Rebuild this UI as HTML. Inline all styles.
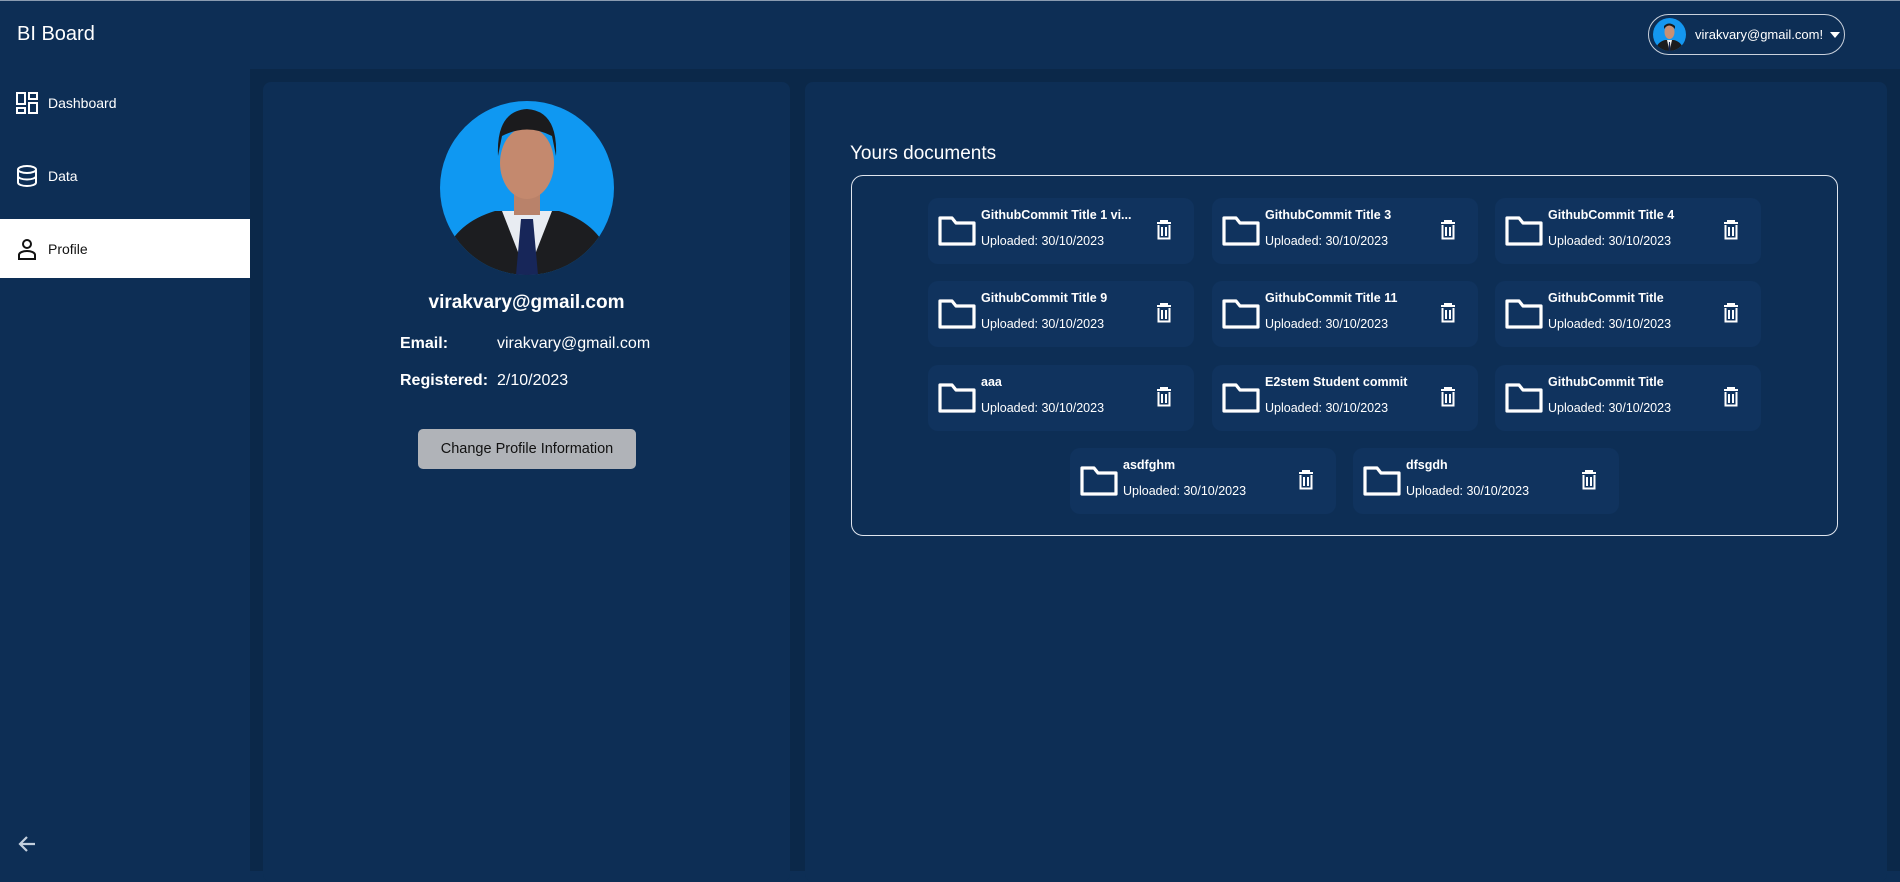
<!DOCTYPE html>
<html><head><meta charset="utf-8"><style>
*{margin:0;padding:0;box-sizing:border-box}
body{width:1900px;height:870px;background:#0d2e55;font-family:"Liberation Sans",sans-serif;color:#fff;position:relative;overflow:hidden;border-top:1px solid #8a9bb0}
.abs{position:absolute}
.content{left:250px;top:68px;width:1650px;height:802px;background:#0b2849}
.card{background:#0d2e55;border-radius:8px}
.nav{left:0;width:250px;height:59px;display:flex;align-items:center;padding-left:16px;font-size:14px}
.nav svg{margin-right:10px}
.doc{width:266px;height:66px;background:#10335e;border-radius:10px}
.doc .t{position:absolute;left:53px;top:10px;font-size:12.5px;font-weight:bold;white-space:nowrap}
.doc .s{position:absolute;left:53px;top:36px;font-size:12.5px}
.doc .f{position:absolute;left:10px;top:17px}
.doc .d{position:absolute;left:228px;top:22px}
</style></head><body>
<div class="abs" style="left:17px;top:22px;font-size:20px">BI Board</div>
<div class="abs" style="left:1648px;top:13px;width:197px;height:41px;border:1px solid #c9d1dc;border-radius:21px">
<svg class="abs" style="left:4px;top:3px" width="33" height="33" viewBox="0 0 33 33"><defs><clipPath id="c1"><circle cx="16.5" cy="16.5" r="16.5"/></clipPath></defs><g clip-path="url(#c1)"><rect width="33" height="33" fill="#1497f0"/><path d="M2 33 Q4 24 12 22 L21 22 Q29 24 31 33Z" fill="#1c1c1e"/><path d="M14 22 L16.5 33 L19 22Z" fill="#eee"/><path d="M16 24 L17 24 L17.5 33 L15.5 33Z" fill="#142552"/><ellipse cx="16.5" cy="14" rx="5" ry="7" fill="#c99074"/><path d="M11 11 Q16 4 22 11 L22 8 Q16 3 11 8Z" fill="#1a1a1a"/></g></svg>
<div class="abs" style="left:46px;top:12px;font-size:13px">virakvary@gmail.com!</div>
<svg class="abs" style="left:181px;top:17px" width="10" height="6"><path d="M0 0H10L5 6Z" fill="#fff"/></svg>
</div>

<div class="abs nav" style="top:72px"><svg width="22" height="22" viewBox="0 0 22 22" fill="none" stroke="#fff" stroke-width="2"><rect x="1" y="1" width="8" height="11"/><rect x="13" y="1" width="8" height="6"/><rect x="1" y="16" width="8" height="5"/><rect x="13" y="11" width="8" height="10"/></svg>Dashboard</div>
<div class="abs nav" style="top:145px"><svg width="22" height="22" viewBox="0 0 22 22" fill="none" stroke="#fff" stroke-width="2"><ellipse cx="11" cy="4.5" rx="9" ry="3.5"/><path d="M2 4.5V17.5C2 19.5 6 21 11 21S20 19.5 20 17.5V4.5M2 11C2 13 6 14.5 11 14.5S20 13 20 11"/></svg>Data</div>
<div class="abs nav" style="top:218px;background:#fff;color:#111"><svg width="22" height="22" viewBox="0 0 22 22" fill="none" stroke="#111" stroke-width="2"><circle cx="11" cy="6" r="4"/><path d="M3 21V17C3 14.5 7 13 11 13S19 14.5 19 17V21Z"/></svg>Profile</div>
<svg class="abs" style="left:17px;top:833px" width="20" height="20" viewBox="0 0 20 20" fill="none" stroke="#c3cfdd" stroke-width="2.2"><path d="M18 10H3M10 3L3 10L10 17"/></svg>

<div class="abs content"></div>
<div class="abs card" style="left:263px;top:81px;width:527px;height:800px"></div>
<div class="abs card" style="left:805px;top:81px;width:1082px;height:800px"></div>

<svg class="abs" style="left:440px;top:100px" width="174" height="174" viewBox="0 0 174 174"><defs><clipPath id="c2"><circle cx="87" cy="87" r="87"/></clipPath></defs><g clip-path="url(#c2)"><rect width="174" height="174" fill="#0f98f2"/><path d="M0 174 Q5 125 55 110 L119 110 Q168 125 174 174Z" fill="#1c1d20"/><path d="M62 110 L87 174 L112 110Z" fill="#e8ecf2"/><path d="M81 118 L93 118 L98 174 L76 174Z" fill="#172659"/><rect x="74" y="90" width="26" height="24" fill="#b9826a"/><ellipse cx="87" cy="62" rx="27" ry="36" fill="#c4896e"/><path d="M58 55 Q56 10 87 8 Q118 10 116 55 L112 35 Q87 22 62 35Z" fill="#1b1b1d"/></g></svg>
<div class="abs" style="left:263px;width:527px;top:291px;text-align:center;font-size:19px;font-weight:bold">virakvary@gmail.com</div>
<div class="abs" style="left:400px;top:334px;font-size:16px;font-weight:bold">Email:</div>
<div class="abs" style="left:497px;top:334px;font-size:16px">virakvary@gmail.com</div>
<div class="abs" style="left:400px;top:371px;font-size:16px;font-weight:bold">Registered:</div>
<div class="abs" style="left:497px;top:371px;font-size:16px">2/10/2023</div>
<div class="abs" style="left:418px;top:428px;width:218px;height:40px;background:#b0b3b8;border-radius:5px;color:#111;font-size:14.5px;text-align:center;line-height:40px">Change Profile Information</div>

<div class="abs" style="left:850px;top:142px;font-size:19px">Yours documents</div>
<div class="abs" style="left:851px;top:174px;width:987px;height:361px;border:1px solid #dfe5ee;border-radius:12px"></div>

<div id="docs"></div>
<script>
var d=[[928,197,"GithubCommit Title 1 vi..."],[1212,197,"GithubCommit Title 3"],[1495,197,"GithubCommit Title 4"],
[928,280,"GithubCommit Title 9"],[1212,280,"GithubCommit Title 11"],[1495,280,"GithubCommit Title"],
[928,364,"aaa"],[1212,364,"E2stem Student commit"],[1495,364,"GithubCommit Title"],
[1070,447,"asdfghm"],[1353,447,"dfsgdh"]];
var h="";
d.forEach(function(a){h+='<div class="abs doc" style="left:'+a[0]+'px;top:'+a[1]+'px"><svg class="f" width="38" height="32" viewBox="0 0 38 32" fill="none" stroke="#fff" stroke-width="3.2" stroke-linejoin="round"><path d="M2 3H14L18 8H36V29H2Z"/></svg><div class="t">'+a[2]+'</div><div class="s">Uploaded: 30/10/2023</div><svg class="d" width="16" height="20" viewBox="0 0 16 20" fill="none" stroke="#fff" stroke-width="2"><path d="M1 3H15M5 3V1H11V3M2.5 5V18.5H13.5V5M6 7V16M10 7V16"/></svg></div>'});
document.getElementById("docs").innerHTML=h;
</script>
</body></html>
